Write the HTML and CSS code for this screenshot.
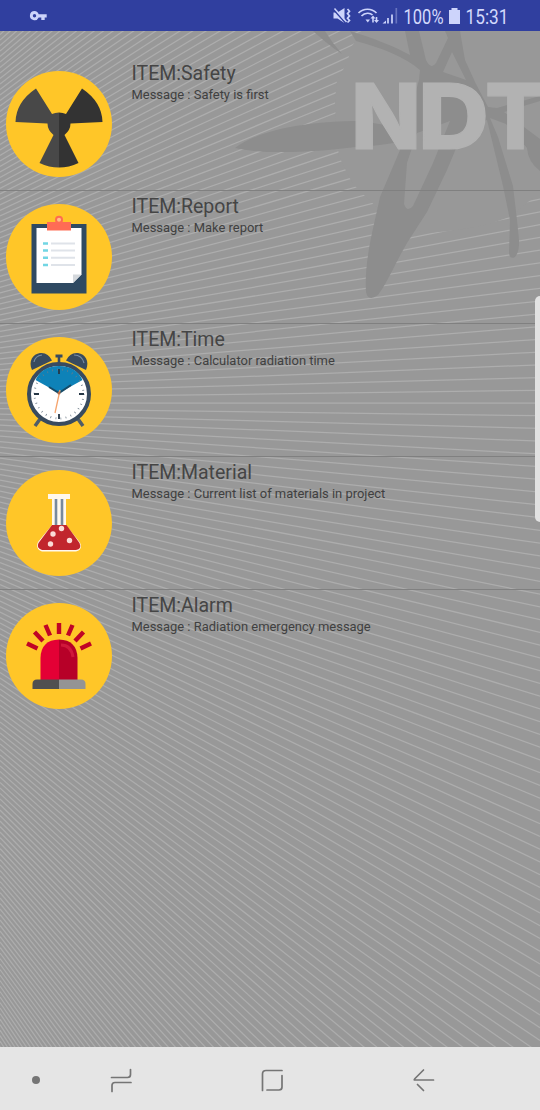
FILE: index.html
```html
<!DOCTYPE html>
<html lang="en">
<head>
<meta charset="utf-8">
<title>NDT</title>
<link rel="stylesheet" href="styles.css">
</head>
<body>
<div class="phone">
  <header class="status">
    <svg width="540" height="31" viewBox="0 0 540 31">
      <g fill="#cdd4fb">
        <path fill-rule="evenodd" d="M34.500 11a4.600 4.600 0 1 0 4.200 6.500h2.600v2.400h3.400v-2.400h2v-3.200h-8a4.600 4.600 0 0 0-4.200-3.300zm0 3a1.700 1.700 0 1 1 0 3.400 1.700 1.700 0 0 1 0-3.400z"/>
        <path d="M333.500 12.500h4l7-4.500v15l-7-4.500h-4z"/>
        <path d="M449 10h2.500V8h6v2h2.500v14h-11z"/>
        <path d="M373 15.500l2.500 3h-1.700v4h-1.600v-4h-1.700zM376.500 23l-2.500-3h1.700v-3h1.600v3h1.700z"/>
        <path d="M365.500 19.500h4.500l-2.200 3z"/>
        <path d="M382.500 23.500l3.500-3v3z"/>
      </g>
      <path d="M333.500 9.500l12 13.500" stroke="#303f9f" stroke-width="1.600"/>
      <g fill="none" stroke="#cdd4fb" stroke-width="1.700">
        <path d="M334.500 8.500l12 13.500" stroke-width="1.500"/>
        <path d="M347.500 9l2 2.300-2 2.300 2 2.300-2 2.300 2 2.300-2 2"/>
        <path d="M358.500 13c5-5 13-5 18 0M361.500 16c3.500-3.500 8.500-3.500 11-1"/>
        <path d="M388 18v5.500M392 14.500v9"/>
        <path d="M396.300 8v15.500" opacity=".35"/>
      </g>
      <text class="status-text" x="403.500" y="23.800" textLength="40" lengthAdjust="spacingAndGlyphs">100%</text>
      <text class="status-text" x="465.500" y="23.800" textLength="43" lengthAdjust="spacingAndGlyphs">15:31</text>
    </svg>
  </header>

  <main class="content">
    <svg class="backdrop" width="540" height="1016" viewBox="0 31 540 1016">
      <g id="rays" stroke="#adadad" stroke-width="1.250"></g>
      <path fill="#989898" d="M364 31L352 46 347 63 337 80 335 100 336 130 339 156 347 173 353 184 366 197 383 213 405 227 427 233C460 231 500 224 515 213L534 197 540 195V31z"/>
      <g fill="#8d8d8d">
        <path d="M235 148C260 129 310 121 360 121L405 128C430 124 450 117 464 108L470 117C450 134 390 146 356 147C315 152 265 155 235 148z"/>
        <path d="M313 31C322 39 330 46 342 54L333 43 325 31z"/>
        <path d="M350 31C370 37 394 46 410 55L405 31H419L426 60Q431 70 436 63L448 38 445 31H460L465 60 476 84 488 107 497 108 540 96V101L504 112 528 130 540 139V171Q528 162 527 148L506 124 490 118 498 137 513 186 517 220 519 240C520 260 509 262 509 252L510 220 503 186 487 120 465 127 447 170 427 212 407 243C396 262 386 285 378 295Q368 302 366 292C364 260 374 226 380 197L400 150 419 80 420 70C405 57 382 48 356 41z"/>
      </g>
      <path fill="#989898" d="M404 204L407 163 417 133 450 121 433 163 413 206Q407 213 404 204zM443 72L452 52 466 80z"/>
      <g class="brand">
        <text x="351" y="148.500" textLength="70" lengthAdjust="spacingAndGlyphs">N</text>
        <text x="418" y="148.500" textLength="71" lengthAdjust="spacingAndGlyphs">D</text>
        <text x="485" y="148.500" textLength="61" lengthAdjust="spacingAndGlyphs">T</text>
      </g>
    </svg>

    <ul class="list">
      <li class="row">
        <svg class="icon" viewBox="0 0 106 106">
          <circle cx="53" cy="53" r="53" fill="#ffc628"/>
          <path fill="#484848" d="M30 17.500L46 43Q49 41.500 53 41.500V96.500Q43 96.500 33.500 92L47.500 64Q41.500 59 41.500 52.500L9.500 51Q10 31 30 17.500z"/>
          <path fill="#333" d="M76 17.500L60 43Q57 41.500 53 41.500V96.500Q63 96.500 72.500 92L58.500 64Q64.500 59 64.500 52.500L96.500 51Q96 31 76 17.500z"/>
        </svg>
        <div class="text"><h2 class="title">ITEM:Safety</h2><p class="message">Message : Safety is first</p></div>
      </li>
      <li class="row">
        <svg class="icon" viewBox="0 0 106 106">
          <circle cx="53" cy="53" r="53" fill="#ffc628"/>
          <path fill="#2f4a62" d="M25.500 20h55v69.500h-55z"/>
          <path fill="#fff" d="M30.500 24h45v46.500l-8.500 8.500H30.500z"/>
          <path fill="#d4d8dc" d="M67 70.500h8.500L67 79z"/>
          <circle cx="53" cy="15.800" r="3" fill="#ffc08a" stroke="#ff6c50" stroke-width="2"/>
          <path fill="#ff6c55" d="M41 18h24v8.500H41z"/>
          <path stroke="#72d6e4" stroke-width="2.500" d="M37 39.500h5M37 46.500h5M37 53.700h5M37 61h5"/>
          <path stroke="#dfe3e9" stroke-width="2" d="M45 39.500h24M45 46.500h24M45 53.700h24M45 61h24"/>
        </svg>
        <div class="text"><h2 class="title">ITEM:Report</h2><p class="message">Message : Make report</p></div>
      </li>
      <li class="row">
        <svg class="icon" viewBox="0 0 106 106">
          <circle cx="53" cy="53" r="53" fill="#ffc628"/>
          <g fill="#394b5f">
            <path d="M26 33C22 24 27 17 34 16Q42 15 46 23.500zM80 33C84 24 79 17 72 16Q64 15 60 23.500z"/>
            <path d="M49.500 17.500h7v3h-2.200V26h-2.600v-5.500h-2.200z"/>
          </g>
          <path d="M28 25Q29 19 36 18M68 18Q76 18 78 26" fill="none" stroke="#788ca4" stroke-width="1.200"/>
          <path d="M34 82l-5 7M72 82l5 7" stroke="#505d68" stroke-width="3.500"/>
          <circle cx="53" cy="57" r="30" fill="#fff" stroke="#394b5f" stroke-width="4"/>
          <path fill="#0e82b8" d="M53 56L29.500 43Q36 29 53 29T76.500 43z"/>
          <circle cx="53" cy="57" r="24.500" fill="none" stroke="#6c7b87" stroke-width="2" stroke-dasharray=".7 4.430"/>
          <path d="M53 32v5M53 77v5M28 57h5M73 57h5" stroke="#263746" stroke-width="1.800"/>
          <path d="M43 50l10 6 12-8" fill="none" stroke="#164b68" stroke-width="2"/>
          <path d="M54 53l-5 23" stroke="#f6a46d" stroke-width="1.300"/>
          <circle cx="53" cy="56" r="1.500" fill="#b66d46"/>
        </svg>
        <div class="text"><h2 class="title">ITEM:Time</h2><p class="message">Message : Calculator radiation time</p></div>
      </li>
      <li class="row">
        <svg class="icon" viewBox="0 0 106 106">
          <circle cx="53" cy="53" r="53" fill="#ffc628"/>
          <path fill="#fff8ed" d="M42 24h22v5h-4v26l14 17.500Q77 80 70 81.500H36Q29 79 32 72L46 55V29h-4z"/>
          <path d="M50 29v26M56 29v26" stroke="#78899d" stroke-width="2.600"/>
          <path fill="#c1262d" d="M46 55h14.500L73.500 73Q76 79 70 80H36Q30 78 32.500 73z"/>
          <g fill="#fbdcd7"><circle cx="55.500" cy="58.500" r="2.700"/><circle cx="47" cy="64" r="2.700"/><circle cx="63.500" cy="70.500" r="2.700"/><circle cx="44.500" cy="74" r="2.700"/></g>
        </svg>
        <div class="text"><h2 class="title">ITEM:Material</h2><p class="message">Message : Current list of materials in project</p></div>
      </li>
      <li class="row">
        <svg class="icon" viewBox="0 0 106 106">
          <circle cx="53" cy="53" r="53" fill="#ffc628"/>
          <path fill="#e40035" d="M34.500 77V55Q35 37 53 36.500V77z"/>
          <path fill="#b70028" d="M53 36.500Q71 37 71.500 55V77H53z"/>
          <path d="M55 42Q65 42 67 54" fill="none" stroke="#d0183b" stroke-width="3"/>
          <path fill="#505050" d="M26.500 86v-5q0-4.500 4.500-4.500h22V86z"/>
          <path fill="#949494" d="M53 76.500h22q4.500 0 4.500 4.500v5H53z"/>
          <path d="M53 20v11M39.500 22l4.500 10.500M66.500 22L62 32.500M28.500 29l8.500 9M77.500 29l-8.500 9M21 40.500l10.500 5M85 40.500l-10.500 5" stroke="#c00426" stroke-width="4.400"/>
        </svg>
        <div class="text"><h2 class="title">ITEM:Alarm</h2><p class="message">Message : Radiation emergency message</p></div>
      </li>
    </ul>
    <div class="edge-handle"></div>
  </main>

  <nav class="navbar">
    <svg width="540" height="63" viewBox="0 0 540 63">
      <circle cx="36" cy="33" r="4" fill="#757575"/>
      <g fill="none" stroke="#757575" stroke-width="1.700" stroke-linecap="round">
        <path d="M111.500 30.500h16q3 0 3-3v-5M131 35.500h-16q-3 0-3 3v6"/>
        <path d="M282 23.500H266q-3.500 0-3.500 3.500V43.500M267 43h12q3 0 3-3V28.500"/>
        <path d="M423.500 23l-8.500 8.500q-1.500 1.500 0 1.500h18.500M417.500 37.500l6 6"/>
      </g>
    </svg>
  </nav>
</div>
<script src="rays.js"></script>
</body>
</html>
```
FILE: styles.css
```css
body {
  margin: 0;
  font-family: Roboto, sans-serif;
}
.phone {
  display: flex;
  flex-direction: column;
  width: 540px;
  height: 1110px;
  overflow: hidden;
}
.status {
  height: 31px;
  background: #303f9f;
}
.status svg, .navbar svg {
  display: block;
}
.status-text {
  font-size: 19.5px;
  fill: #d3d9fc;
}
.content {
  position: relative;
  flex: 1;
  overflow: hidden;
  background: #989898;
}
.backdrop {
  position: absolute;
  inset: 0;
}
.brand {
  font-family: Inter, sans-serif;
  font-weight: 800;
  font-size: 91px;
  fill: #b2b2b2;
  stroke: #b2b2b2;
  stroke-width: 1.2px;
}
.list {
  position: relative;
  list-style: none;
  margin: 0;
  padding: 27px 0 0;
}
.row {
  display: flex;
  box-sizing: border-box;
  height: 133px;
  padding-left: 6.3px;
  gap: 19.2px;
  border-bottom: 1px solid #808080;
}
.row:last-child {
  border-bottom: 0;
}
.icon {
  width: 106px;
  height: 106px;
  margin-top: 13.3px;
}
.text {
  padding-top: 4px;
}
.title {
  margin: 0;
  font-size: 19.5px;
  line-height: 23px;
  font-weight: 400;
  color: #454545;
}
.message {
  margin: 2px 0 0;
  font-size: 12.95px;
  line-height: 16px;
  color: #404040;
}
.edge-handle {
  position: absolute;
  right: 0;
  top: 265px;
  width: 5px;
  height: 226px;
  border-radius: 5px 0 0 5px;
  background: #e2e2e2;
}
.navbar {
  height: 63px;
  background: #e5e5e5;
}
```
FILE: rays.js
```js
// Rays fan out from a point left of the screen, evenly spaced vertically.
const rays = document.getElementById("rays");
const originY = 403;
for (let k = -70; k <= 122; k++) {
  const line = document.createElementNS("http://www.w3.org/2000/svg", "line");
  line.setAttribute("x1", 0);
  line.setAttribute("y1", originY + k * 5.5);
  line.setAttribute("x2", 540);
  line.setAttribute("y2", originY + k * 12.75);
  rays.appendChild(line);
}
```
